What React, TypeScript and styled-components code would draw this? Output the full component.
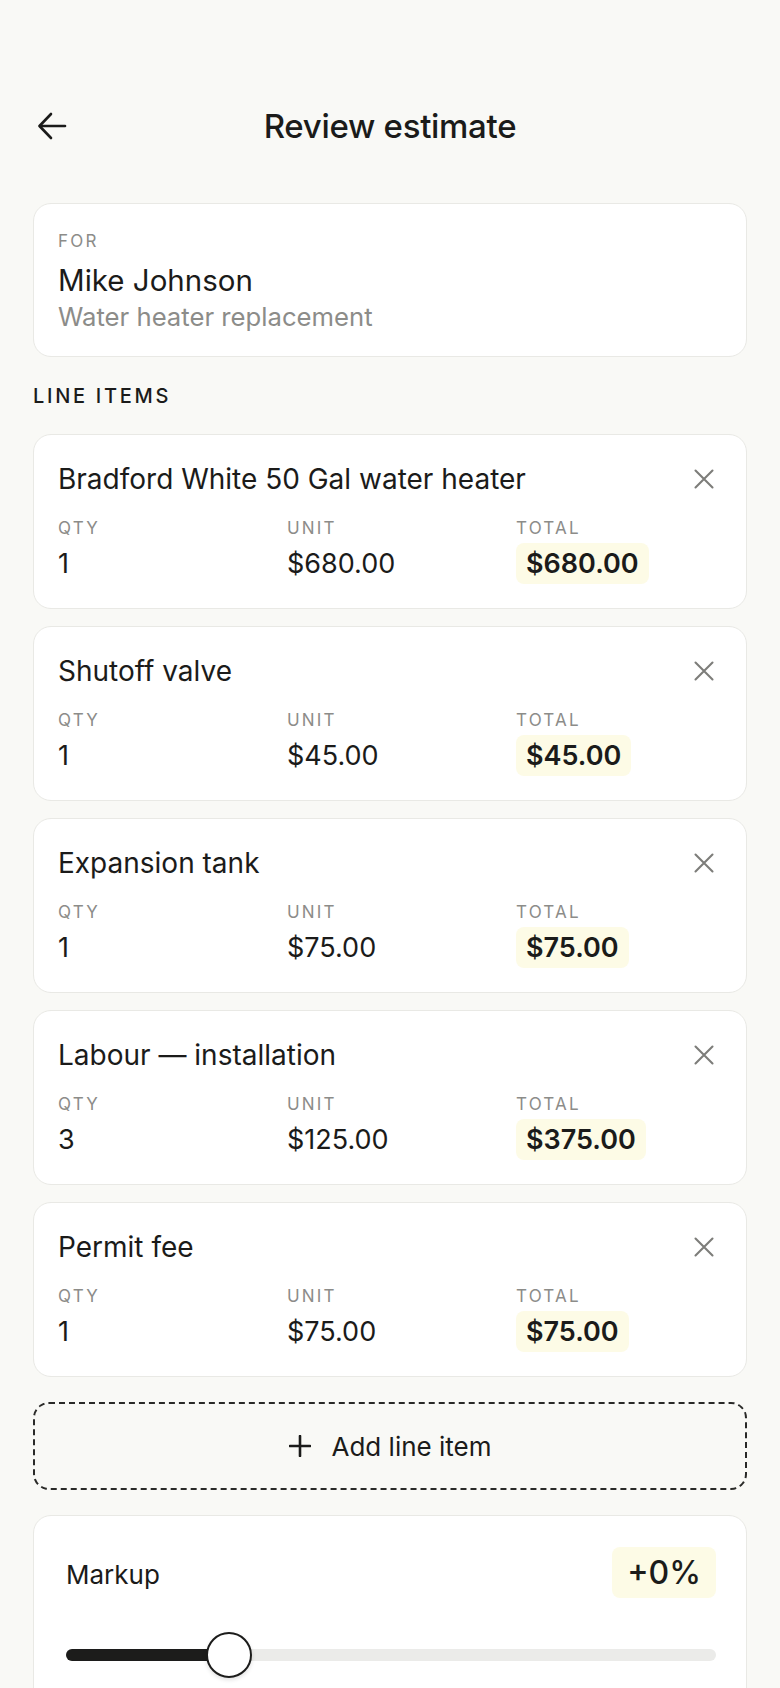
import styled, { createGlobalStyle } from 'styled-components';

const GlobalStyle = createGlobalStyle`
  html, body {
    margin: 0;
    padding: 0;
    background: #f9f9f6;
  }
  body {
    font-family: Inter, "Noto Sans", "Liberation Sans", sans-serif;
    color: #1b1b1a;
    -webkit-font-smoothing: antialiased;
  }
  * {
    box-sizing: border-box;
  }
`;

const Page = styled.div`
  width: 780px;
  min-height: 1688px;
  padding: 86px 33px 0;
  display: flex;
  flex-direction: column;
  overflow: hidden;
`;

const Header = styled.header`
  height: 80px;
  display: grid;
  grid-template-columns: 56px 1fr 56px;
  align-items: center;
`;

const IconButton = styled.button`
  display: flex;
  align-items: center;
  justify-content: center;
  width: 32px;
  height: 32px;
  padding: 0;
  border: none;
  background: none;
  color: ${(p: { $tone?: string }) => p.$tone || '#1b1b1a'};
  cursor: pointer;
`;

const BackButton = styled(IconButton)`
  width: 40px;
  height: 40px;
  justify-content: flex-start;
  padding-left: 4px;
`;

const Title = styled.h1`
  margin: 0;
  text-align: center;
  font-size: 33px;
  font-weight: 500;
  letter-spacing: -0.3px;
`;

const Card = styled.section`
  background: #ffffff;
  border: 1.5px solid #e9e9e5;
  border-radius: 18px;
`;

const ClientCard = styled(Card)`
  margin-top: 37px;
  padding: 27px 24px 23px;
`;

const SmallLabel = styled.div`
  font-size: 17px;
  line-height: 20px;
  letter-spacing: 2.2px;
  color: #8c8c89;
  text-transform: uppercase;
`;

const ClientName = styled.div`
  margin-top: 11px;
  font-size: 29.5px;
  line-height: 36px;
`;

const ClientJob = styled.div`
  margin-top: 3px;
  font-size: 25.7px;
  line-height: 32px;
  color: #8c8c89;
`;

const SectionLabel = styled.h2`
  margin: 27px 0 26px;
  font-size: 20px;
  line-height: 24px;
  font-weight: 500;
  letter-spacing: 2.7px;
  text-transform: uppercase;
`;

const ItemList = styled.div`
  display: flex;
  flex-direction: column;
  gap: 17px;
`;

const ItemCard = styled(Card)`
  padding: 27px 24px 24px;
`;

const ItemHead = styled.div`
  display: flex;
  align-items: center;
  justify-content: space-between;
  height: 34px;
`;

const ItemName = styled.div`
  font-size: 28px;
`;

const RemoveButton = styled(IconButton)`
  margin-right: 2px;
`;

const Fields = styled.div`
  margin-top: 22px;
  display: grid;
  grid-template-columns: 229px 229px 1fr;
`;

const Field = styled.div`
  display: flex;
  flex-direction: column;
  align-items: flex-start;
  gap: 5px;
`;

const Value = styled.div`
  height: 41px;
  display: flex;
  align-items: center;
  font-size: 27px;
`;

const Highlight = styled.span`
  display: inline-block;
  padding: 3px 10px;
  line-height: 35px;
  border-radius: 8px;
  background: #fdfbe6;
  font-weight: ${(p: { $bold?: boolean }) => (p.$bold ? 600 : 500)};
  color: #1b1b1a;
`;

const AddButton = styled.button`
  margin-top: 25px;
  height: 88px;
  display: flex;
  align-items: center;
  justify-content: center;
  gap: 21px;
  border: 2px dashed #2a2a28;
  border-radius: 16px;
  background: transparent;
  font-family: inherit;
  font-size: 26px;
  color: #1b1b1a;
  cursor: pointer;
`;

const MarkupCard = styled(Card)`
  margin-top: 25px;
  padding: 31px 30px 40px 32px;
`;

const MarkupHead = styled.div`
  display: flex;
  align-items: center;
  justify-content: space-between;
`;

const MarkupLabel = styled.div`
  font-size: 26px;
  margin-top: 4px;
`;

const MarkupValue = styled.div`
  padding: 5px 15px;
  line-height: 41px;
  border-radius: 8px;
  background: #fdfbe6;
  font-size: 32px;
  font-weight: 500;
`;

const SliderWrap = styled.div`
  position: relative;
  margin-top: 34px;
  height: 46px;
  display: flex;
  align-items: center;
`;

const Track = styled.div`
  position: relative;
  width: 100%;
  height: 12px;
  border-radius: 6px;
  background: #ebebe9;
`;

const Fill = styled.div`
  height: 100%;
  border-radius: 6px 0 0 6px;
  background: #1c1c1b;
`;

const Thumb = styled.div`
  position: absolute;
  top: 0;
  width: 46px;
  height: 46px;
  margin-left: -23px;
  border-radius: 50%;
  border: 2.5px solid #1c1c1b;
  background: #ffffff;
  box-shadow: 0 2px 4px rgba(0, 0, 0, 0.12);
`;

type LineItem = { name: string; qty: number; unit: string; total: string };

const items: LineItem[] = [
  { name: 'Bradford White 50 Gal water heater', qty: 1, unit: '$680.00', total: '$680.00' },
  { name: 'Shutoff valve', qty: 1, unit: '$45.00', total: '$45.00' },
  { name: 'Expansion tank', qty: 1, unit: '$75.00', total: '$75.00' },
  { name: 'Labour \u2014 installation', qty: 3, unit: '$125.00', total: '$375.00' },
  { name: 'Permit fee', qty: 1, unit: '$75.00', total: '$75.00' },
];

const ArrowLeft = () => (
  <svg width="30" height="28" viewBox="0 0 30 28" fill="none" stroke="currentColor" strokeWidth="2.6" strokeLinecap="round" strokeLinejoin="round">
    <path d="M28 14H3" />
    <path d="M14 2 2.5 14 14 26" />
  </svg>
);

const CloseIcon = () => (
  <svg width="20" height="20" viewBox="0 0 20 20" fill="none" stroke="currentColor" strokeWidth="2.1" strokeLinecap="round">
    <path d="M1.5 1.5l17 17M18.5 1.5l-17 17" />
  </svg>
);

const PlusIcon = () => (
  <svg width="22" height="22" viewBox="0 0 22 22" fill="none" stroke="currentColor" strokeWidth="2.6" strokeLinecap="round">
    <path d="M11 1v20M1 11h20" />
  </svg>
);

const markupPos = 25; // percent of the track

export default function App() {
  return (
    <>
      <GlobalStyle />
      <Page>
        <Header>
          <BackButton aria-label="Back">
            <ArrowLeft />
          </BackButton>
          <Title>Review estimate</Title>
          <span />
        </Header>

        <ClientCard>
          <SmallLabel>For</SmallLabel>
          <ClientName>Mike Johnson</ClientName>
          <ClientJob>Water heater replacement</ClientJob>
        </ClientCard>

        <SectionLabel>Line items</SectionLabel>

        <ItemList>
          {items.map((item) => (
            <ItemCard key={item.name}>
              <ItemHead>
                <ItemName>{item.name}</ItemName>
                <RemoveButton $tone="#7d7d7a" aria-label="Remove">
                  <CloseIcon />
                </RemoveButton>
              </ItemHead>
              <Fields>
                <Field>
                  <SmallLabel>Qty</SmallLabel>
                  <Value>{item.qty}</Value>
                </Field>
                <Field>
                  <SmallLabel>Unit</SmallLabel>
                  <Value>{item.unit}</Value>
                </Field>
                <Field>
                  <SmallLabel>Total</SmallLabel>
                  <Value>
                    <Highlight $bold>{item.total}</Highlight>
                  </Value>
                </Field>
              </Fields>
            </ItemCard>
          ))}
        </ItemList>

        <AddButton>
          <PlusIcon />
          Add line item
        </AddButton>

        <MarkupCard>
          <MarkupHead>
            <MarkupLabel>Markup</MarkupLabel>
            <MarkupValue>+0%</MarkupValue>
          </MarkupHead>
          <SliderWrap>
            <Track>
              <Fill style={{ width: `${markupPos}%` }} />
            </Track>
            <Thumb style={{ left: `${markupPos}%` }} />
          </SliderWrap>
        </MarkupCard>
      </Page>
    </>
  );
}
